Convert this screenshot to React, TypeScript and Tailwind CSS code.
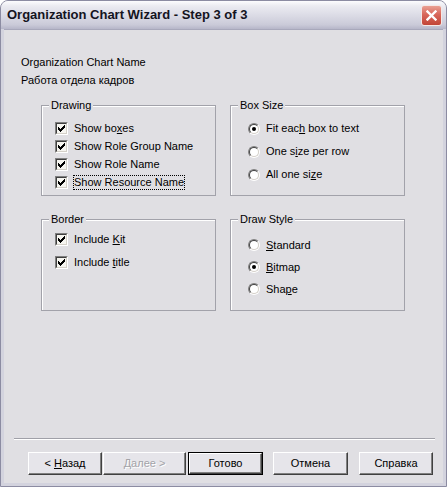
import React from "react";

const font = { fontFamily: '"Liberation Sans", Arial, sans-serif' };

function U({ children }: { children: React.ReactNode }) {
  return <span className="underline underline-offset-[1px]">{children}</span>;
}

function CheckBox() {
  return (
    <div className="w-[13px] h-[13px] shrink-0 border border-t-[#808080] border-l-[#808080] border-r-white border-b-white">
      <div className="w-full h-full border border-t-[#404040] border-l-[#404040] border-r-[#d4d0c8] border-b-[#d4d0c8] bg-[#f6f5f0] p-px">
        <svg width="7" height="7" viewBox="0 0 7 7" shapeRendering="crispEdges">
          <path d="M0 2h1v3H0z M1 3h1v3H1z M2 4h1v3H2z M3 3h1v3H3z M4 2h1v3H4z M5 1h1v3H5z M6 0h1v3H6z" fill="#000" />
        </svg>
      </div>
    </div>
  );
}

function Radio({ on }: { on?: boolean }) {
  return (
    <div className="w-[12px] h-[12px] shrink-0 rounded-full border border-t-[#808080] border-l-[#808080] border-r-white border-b-white">
      <div className="w-full h-full rounded-full border border-t-[#404040] border-l-[#404040] border-r-[#d4d0c8] border-b-[#d4d0c8] bg-white flex items-center justify-center">
        {on && <div className="w-[4px] h-[4px] rounded-full bg-black" />}
      </div>
    </div>
  );
}

function Group({ label, className, children }: { label: string; className: string; children: React.ReactNode }) {
  return (
    <div className={`relative border border-[#a2a2aa] shadow-[inset_1px_1px_0_#ffffff] ${className}`}>
      <span className="absolute -top-[8px] left-[7px] px-[2px] bg-[#e0dfe3] leading-[14px]">{label}</span>
      {children}
    </div>
  );
}

function Btn({ children, w, def, disabled }: { children: React.ReactNode; w: string; def?: boolean; disabled?: boolean }) {
  return (
    <div className={`${w} h-[23px] ${def ? "border border-black" : ""}`}>
      <div className="w-full h-full border border-t-white border-l-white border-r-[#404040] border-b-[#404040] shadow-[inset_-1px_-1px_0_#808080] bg-[#e6e5ea] flex items-center justify-center">
        <span className={disabled ? "text-[#a3a3a8] [text-shadow:1px_1px_0_#ffffff]" : ""}>{children}</span>
      </div>
    </div>
  );
}

export default function App() {
  return (
    <div className="w-[447px] h-[487px] flex flex-col rounded-t-[8px] overflow-hidden bg-[#d3d3de] border border-[#8c8ca2] text-[11px] text-black" style={font}>
      <div className="h-[28px] shrink-0 flex items-center pl-[6px] pr-[4px] bg-[linear-gradient(to_bottom,#fdfdfe_0%,#ebebf1_18%,#dcdce6_50%,#cacad8_85%,#b6b6c9_100%)]">
        <span className="text-[13px] font-bold text-[#14141e] flex-1">Organization Chart Wizard - Step 3 of 3</span>
        <div className="w-[21px] h-[21px] mt-[1px] rounded-[3px] border border-[#f4e8e6] bg-[linear-gradient(to_bottom,#e9a093_0%,#d8675a_45%,#c24538_100%)] flex items-center justify-center">
          <svg width="11" height="11" viewBox="0 0 11 11">
            <path d="M1.5 1.5L9.5 9.5M9.5 1.5L1.5 9.5" stroke="#fff" strokeWidth="2.4" strokeLinecap="square" />
          </svg>
        </div>
      </div>
      <div className="flex-1 flex flex-col mx-[3px] mb-[3px] bg-[#e0dfe3] border-t border-[#a8a8bb]">
        <div className="pl-[17px] pt-[23px] leading-[18px]">
          <div>Organization Chart Name</div>
          <div>Работа отдела кадров</div>
        </div>
        <div className="pl-[37px] mt-[16px] grid grid-cols-[175px_175px] gap-x-[14px] gap-y-[23px]">
          <Group label="Drawing" className="h-[91px] pl-[13px] pt-[13px]">
            <div className="flex items-center gap-[6px] h-[18px]"><CheckBox /><span>Show bo<U>x</U>es</span></div>
            <div className="flex items-center gap-[6px] h-[18px]"><CheckBox /><span>Show Role Group Name</span></div>
            <div className="flex items-center gap-[6px] h-[18px]"><CheckBox /><span>Show Role Name</span></div>
            <div className="flex items-center gap-[6px] h-[18px]"><CheckBox /><span className="outline-1 outline-dotted outline-black leading-[13px]">Show Resource Name</span></div>
          </Group>
          <Group label="Box Size" className="h-[91px] pl-[17px] pt-[11px]">
            <div className="flex items-center gap-[6px] h-[23px]"><Radio on /><span>Fit eac<U>h</U> box to text</span></div>
            <div className="flex items-center gap-[6px] h-[23px]"><Radio /><span>One s<U>i</U>ze per row</span></div>
            <div className="flex items-center gap-[6px] h-[23px]"><Radio /><span>All one si<U>z</U>e</span></div>
          </Group>
          <Group label="Border" className="h-[92px] pl-[13px] pt-[8px]">
            <div className="flex items-center gap-[6px] h-[23px]"><CheckBox /><span>Include <U>K</U>it</span></div>
            <div className="flex items-center gap-[6px] h-[23px]"><CheckBox /><span>Include <U>t</U>itle</span></div>
          </Group>
          <Group label="Draw Style" className="h-[92px] pl-[17px] pt-[14px]">
            <div className="flex items-center gap-[6px] h-[22px]"><Radio /><span><U>S</U>tandard</span></div>
            <div className="flex items-center gap-[6px] h-[22px]"><Radio on /><span><U>B</U>itmap</span></div>
            <div className="flex items-center gap-[6px] h-[22px]"><Radio /><span>Sha<U>p</U>e</span></div>
          </Group>
        </div>
        <div className="flex-1" />
        <div className="ml-[10px] mr-[8px] h-[2px] border-t border-[#a0a0a8] border-b border-b-white" />
        <div className="mt-[12px] mb-[8px] pl-[24px] flex">
          <Btn w="w-[74px]">&lt; <U>Н</U>азад</Btn>
          <div className="w-[1px]" />
          <Btn w="w-[83px]" disabled><U>Д</U>алее &gt;</Btn>
          <div className="w-[2px]" />
          <Btn w="w-[75px]" def>Готово</Btn>
          <div className="w-[10px]" />
          <Btn w="w-[75px]">Отмена</Btn>
          <div className="w-[11px]" />
          <Btn w="w-[74px]">Справка</Btn>
        </div>
      </div>
    </div>
  );
}
